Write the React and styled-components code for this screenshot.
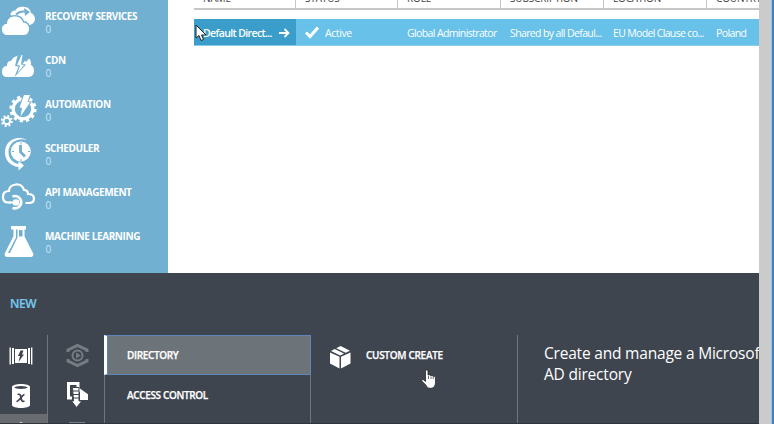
import React from "react";
import styled, { createGlobalStyle } from "styled-components";

const BLUE = "#72b0d2";
const DARK = "#3e454f";

const Global = createGlobalStyle`
  * { box-sizing: border-box; }
  body { margin: 0; background: #fff; font-family: "Open Sans", "Noto Sans", sans-serif; overflow: hidden; }
  svg { display: block; flex: none; }
`;

const Page = styled.div`
  position: relative;
  display: flex;
  width: 774px;
  height: 424px;
  overflow: hidden;
`;
const Main = styled.div`
  display: flex;
  flex-direction: column;
  width: 759px;
  overflow: hidden;
`;
const Scrollbar = styled.div`
  width: 15px;
  background: #cbcbcb;
  border-right: 2px solid #4482c0;
  box-shadow: inset -1px 0 #8fc3ec;
`;
const Upper = styled.div`
  display: flex;
  height: 273px;
`;
const Sidebar = styled.nav`
  width: 168px;
  height: 273px;
  overflow: hidden;
  background: ${BLUE};
`;
const Service = styled.div`
  display: flex;
  height: 44px;
  gap: 5px;
`;
const ServiceText = styled.div`
  padding-top: 9px;
  color: #fff;
  white-space: nowrap;
`;
const ServiceName = styled.div`
  font-size: 10px;
  font-weight: 700;
  line-height: 14px;
  letter-spacing: ${(p) => p.$ls}px;
`;
const ServiceCount = styled.div`
  font-size: 10px;
  line-height: 13px;
  color: #c9e6f5;
  padding-left: 0.5px;
`;
const Content = styled.div`
  flex: 1;
  min-width: 0;
  padding-left: 26px;
`;
const HeaderRow = styled.div`
  display: grid;
  grid-template-columns: 102px 102px 103px 103px 103px 1fr;
  height: 10px;
  border-bottom: 2px solid #c6c6c6;
  overflow: hidden;
`;
const HeaderCell = styled.div`
  height: 8px;
  padding-left: 9px;
  border-right: 1px solid #c6c6c6;
  color: #444;
  font-size: 10px;
  line-height: 14px;
  letter-spacing: -0.15px;
  white-space: nowrap;
  overflow: hidden;
  &:last-child { border-right: 0; }
  span { display: block; margin-top: -9.5px; }
`;
const DataRow = styled.div`
  display: grid;
  grid-template-columns: 102px 102px 103px 103px 103px 1fr;
  height: 27px;
  margin-top: 9px;
  background: #68c1e9;
  border-bottom: 1px solid #86cdee;
`;
const Cell = styled.div`
  display: flex;
  align-items: center;
  padding: 1px 0 0 9px;
  font-size: 10.5px;
  letter-spacing: ${(p) => p.$ls || 0}px;
  color: #fff;
  white-space: nowrap;
  background: ${(p) => (p.$selected ? "#3b9dc9" : "transparent")};
  font-weight: ${(p) => (p.$selected ? 600 : 400)};
  svg { margin-left: ${(p) => (p.$selected ? "auto" : "0")}; margin-right: 6px; }
`;
const Drawer = styled.section`
  height: 151px;
  background: ${DARK};
  border-bottom: 1px solid #30353d;
  color: #fff;
`;
const DrawerTitle = styled.div`
  height: 62px;
  padding: 22px 0 0 10px;
  color: #75c9ee;
  font-size: 12px;
  font-weight: 600;
  line-height: 18px;
  letter-spacing: -0.45px;
  -webkit-text-stroke: 0.2px #75c9ee;
`;
const Columns = styled.div`
  display: grid;
  grid-template-columns: 48px 56px 207px 207px 1fr;
  height: 88px;
`;
const IconColumn = styled.div`
  border-right: ${(p) => (p.$line ? "1px solid #70757c" : "0")};
  overflow: hidden;
`;
const Menu = styled.div`
  border: solid #70757c;
  border-width: 0 1px;
`;
const MenuItem = styled.div`
  height: 40px;
  margin: 0 -1px;
  padding-left: ${(p) => (p.$active ? 20 : 23)}px;
  border: 1px solid ${(p) => (p.$active ? "#5d86bd" : "transparent")};
  border-left: ${(p) => (p.$active ? "3px solid #fff" : "0")};
  background: ${(p) => (p.$active ? "#6d7479" : "transparent")};
  box-shadow: ${(p) => (p.$active ? "inset 1px 0 #5d86bd" : "none")};
  font-size: 10px;
  font-weight: 600;
  line-height: 38px;
  letter-spacing: ${(p) => p.$ls}px;
  -webkit-text-stroke: 0.25px #fff;
`;
const CreatePane = styled.div`
  display: flex;
  gap: 14px;
  padding: 10px 0 0 19px;
  border-right: 1px solid #70757c;
`;
const CreateLabel = styled.div`
  font-size: 10px;
  font-weight: 600;
  line-height: 20px;
  letter-spacing: -0.3px;
  white-space: nowrap;
  -webkit-text-stroke: 0.25px #fff;
`;
const Description = styled.p`
  margin: 0;
  padding: 8px 0 0 26px;
  width: 300px;
  font-size: 15.5px;
  line-height: 21px;
  letter-spacing: -0.2px;
  white-space: nowrap;
`;
const Pointer = styled.div`
  position: absolute;
  left: ${(p) => p.$x}px;
  top: ${(p) => p.$y}px;
`;

const ServiceSvg = ({ children }) => (
  <svg width="40" height="44" viewBox="0 0 40 44" fill="#fff">{children}</svg>
);

const RecoveryIcon = () => (
  <ServiceSvg>
    <path d="M10.500 15c0-3 2-4.500 5-4.500 1-3 5-4.500 9-3.500 4 0 6 3 6.500 6 3 1 4 4 4 6 0 3-2 5-5 6H20z" />
    <path d="M16 14.500c2.500-2.500 5-3.500 9-3" fill="none" stroke={BLUE} strokeWidth="2" />
    <path d="M24 8l6 4-5 4z" fill={BLUE} />
    <path d="M8 35c-4 0-6-2-6-6 0-3 2-5 5-5 0-5 3-7.500 8-7.500 4 0 7 2 8 6 4 0 6 3 6 6.500 0 3-2 6-5 6z" stroke={BLUE} strokeWidth="3" paintOrder="stroke" />
  </ServiceSvg>
);
const CdnIcon = () => (
  <ServiceSvg>
    <path d="M7 33c-3 0-5-2-5-5 0-4 2-6 5-6 0-3 1-5 4-5 1.500-3 4-5 8-5.500l3 1.500 4 5 3-3.500c2 1.500 2 4 2 6.500 2 1 3 3 3 6s-2 6-6 6z" />
    <path d="M17.500 11.500L15 22l3.500.5-4 10.500L26 20.500l-3.500-.5L26 15l3-4h-8z" fill={BLUE} />
    <path d="M21.500 11L17 21l3 .5L17.500 29l6.500-8-3-.5 1.500-9.500z" />
  </ServiceSvg>
);
const AutomationIcon = () => (
  <ServiceSvg>
    <circle cx="23" cy="21" r="12" fill="none" stroke="#fff" strokeWidth="3.200" strokeDasharray="3.142 3.142" />
    <circle cx="23" cy="21" r="9.800" fill="none" stroke="#fff" strokeWidth="3.200" />
    <path d="M24 7h6l-2.500 6.500 2.500 1-9.500 14L22 20l-2.500-.5z" stroke={BLUE} strokeWidth="2" paintOrder="stroke" />
    <circle cx="6.800" cy="33" r="4.900" fill="none" stroke="#fff" strokeWidth="2.200" strokeDasharray="1.920 1.920" />
    <circle cx="6.800" cy="33" r="3.300" fill="none" stroke="#fff" strokeWidth="2" />
  </ServiceSvg>
);
const SchedulerIcon = () => (
  <ServiceSvg>
    <circle cx="20.800" cy="19.500" r="10" />
    <path d="M20.500 13v7l4.500 4.500" fill="none" stroke={BLUE} strokeWidth="2.800" />
    <path d="M21 10.500v2M21 27v2M12 19.500h2M28 19.500h2" stroke={BLUE} />
    <path d="M27 8C17 3 6 8 5 19c-.5 9 5 15 13.500 16v3.500l5.500-5-5.500-4.500v3C13 31 8.500 27 8.500 20 8.500 11 17 5 27 8z" />
  </ServiceSvg>
);
const ApiIcon = () => (
  <ServiceSvg>
    <path d="M11 26.500H8c-3 0-5-2-5-5.500s2-6 6-6c0-4 3-6 7-6.500 4-.5 7 2 8 5.500 3 0 4 2 4 4 4 0 6 2 6 4.500 0 3-2 4.500-5 4.500h-3.500" fill="none" stroke="#fff" strokeWidth="2.200" />
    <path d="M12.500 20.500c4-1.500 8.500 1 8.700 5.500 0 4.500-4 7.500-8.700 6" fill="none" stroke="#fff" strokeWidth="2.600" />
    <circle cx="16" cy="26.500" r="3.300" />
    <path d="M9 26.500h7" stroke="#fff" strokeWidth="2" />
  </ServiceSvg>
);
const FlaskIcon = () => (
  <ServiceSvg>
    <path d="M11 6h15v3.500h-1.500v7L33 33c1 2 0 4-2 4H7c-2 0-3-2-2-4l8.500-17V9.500H11z" />
    <path d="M16 9.500h1.500v8L10 33H8l8-15.500zM19 10h3.500v6.500H19z" fill={BLUE} />
  </ServiceSvg>
);

const SERVICES = [
  ["RECOVERY SERVICES", RecoveryIcon, -0.41],
  ["CDN", CdnIcon, -0.35],
  ["AUTOMATION", AutomationIcon, -0.41],
  ["SCHEDULER", SchedulerIcon, -0.41],
  ["API MANAGEMENT", ApiIcon, -0.41],
  ["MACHINE LEARNING", FlaskIcon, -0.41],
];
const HEADERS = ["NAME", "STATUS", "ROLE", "SUBSCRIPTION", "LOCATION", "COUNTRY"];

const CategoryIcons = () => (
  <svg width="47" height="89" viewBox="0 0 47 89" fill="#fff">
    <path d="M9.500 12.500h1.400v17H9.500zM12 13h2v16h-2zM15 14l12 0v14H15zM28 13h2v16h-2zM31 12.500h1.400v17H31z" />
    <path d="M20.500 15.500h3L22 19.500h2L18.500 27l1.500-6h-2z" fill={DARK} />
    <path d="M12 52c0-4 18-4 18 0v18c0 4-18 4-18 0z" />
    <ellipse cx="21" cy="52.500" rx="6.500" ry="1.500" fill={DARK} />
    <path d="M17.500 59.500c3-1 3 1 3.500 3.500s1 4 3.500 3M24.500 59.500c-2 0-5 6.500-8 7" fill="none" stroke={DARK} strokeWidth="1.700" />
    <path d="M0 79h47v10H0z" fill="#686c70" />
    <path d="M21 86.500l3 2.500h-6z" fill="#c9cbcd" />
  </svg>
);
const AppIcons = () => (
  <svg width="56" height="89" viewBox="0 0 56 89" fill="#fff">
    <g fill="none" stroke="#777c82" strokeWidth="2">
      <path d="M20 17v-2l9.500-4.500L39 15v2M20 24v2l9.500 4.500L39 26v-2" strokeWidth="3" />
      <circle cx="29.500" cy="20.500" r="5" />
    </g>
    <path d="M28 17.500l4.800 3-4.800 3z" fill="#777c82" />
    <path d="M24 63h-3.500V48.500H30v5.500l8.500 6v3.500H33" fill="none" stroke="#fff" strokeWidth="3" />
    <path d="M32 55l8 6v4h-8z" />
    <path d="M24.500 52.500h6.500V66h3l-5.500 6.500L23.500 66h2z" stroke={DARK} strokeWidth="1" />
    <path d="M25 56h6M25 59.500h6M25 63h6" stroke={DARK} />
    <path d="M21 87h16v2H21z" fill="#777c82" />
  </svg>
);
const BoxIcon = () => (
  <svg width="22" height="24" viewBox="0 0 22 24" fill="#fff">
    <path d="M0 7.500l9.500 4.300V23.500L0 18.500zM11 11.800L20.500 7.500v11L11 23.500zM1 6l3.600-1.900 9.400 4.300-3.800 2zM6.200 3.300L10.600 1 20 5.800l-4.300 1.900z" />
  </svg>
);

export default function App() {
  return (
    <Page>
      <Global />
      <Main>
        <Upper>
          <Sidebar>
            {SERVICES.map(([name, Icon, ls]) => (
              <Service key={name}>
                <Icon />
                <ServiceText>
                  <ServiceName $ls={ls}>{name}</ServiceName>
                  <ServiceCount>0</ServiceCount>
                </ServiceText>
              </Service>
            ))}
          </Sidebar>
          <Content>
            <HeaderRow>
              {HEADERS.map((h) => <HeaderCell key={h}><span>{h}</span></HeaderCell>)}
            </HeaderRow>
            <DataRow>
              <Cell $selected $ls={-0.62}>
                Default Direct...
                <svg width="11" height="10" viewBox="0 0 11 10" fill="none" stroke="#fff" strokeWidth="1.800"><path d="M0 5h9.500M5.500 1l4 4-4 4" /></svg>
              </Cell>
              <Cell $ls={-0.42}>
                <svg width="14" height="13" viewBox="0 0 14 13" fill="none" stroke="#fff" strokeWidth="3"><path d="M1 6.500l4 4L13 1.500" /></svg>
                Active
              </Cell>
              <Cell $ls={-0.62}>Global Administrator</Cell>
              <Cell $ls={-0.62}>Shared by all Defaul...</Cell>
              <Cell $ls={-0.66}>EU Model Clause co...</Cell>
              <Cell $ls={-0.62}>Poland</Cell>
            </DataRow>
          </Content>
        </Upper>
        <Drawer>
          <DrawerTitle>NEW</DrawerTitle>
          <Columns>
            <IconColumn $line><CategoryIcons /></IconColumn>
            <IconColumn><AppIcons /></IconColumn>
            <Menu>
              <MenuItem $active $ls={-0.35}>DIRECTORY</MenuItem>
              <MenuItem $ls={-0.35}>ACCESS CONTROL</MenuItem>
            </Menu>
            <CreatePane>
              <BoxIcon />
              <CreateLabel>CUSTOM CREATE</CreateLabel>
            </CreatePane>
            <Description>Create and manage a Microsof<br />AD directory</Description>
          </Columns>
        </Drawer>
      </Main>
      <Scrollbar />
      <Pointer $x={195} $y={24}>
        <svg width="12" height="18" viewBox="0 0 12 18"><path d="M1 1v13l3-2.500L6 16.500l2.500-1L6.500 11H11z" fill="#fff" stroke="#222" /></svg>
      </Pointer>
      <Pointer $x={421} $y={369}>
        <svg width="16" height="21" viewBox="0 0 16 21"><path d="M4.500 2c0-1.500 2.500-1.500 2.500 0v4l1.500-.2 1.300.8 1.200-.2 1.300 1 1-.1c1 .4 1.200 1 1.200 2v4c0 3-1.500 6-4.500 6H9c-2 0-3-1-4-3L.8 12c-.5-1.500 1-2 2-1l1.700 1.500z" fill="#fff" stroke="#23272d" strokeWidth=".8" /><path d="M7.500 7v3M10 7.500V10M12.200 8v2" stroke="#3e454f" strokeWidth=".8" /></svg>
      </Pointer>
    </Page>
  );
}
